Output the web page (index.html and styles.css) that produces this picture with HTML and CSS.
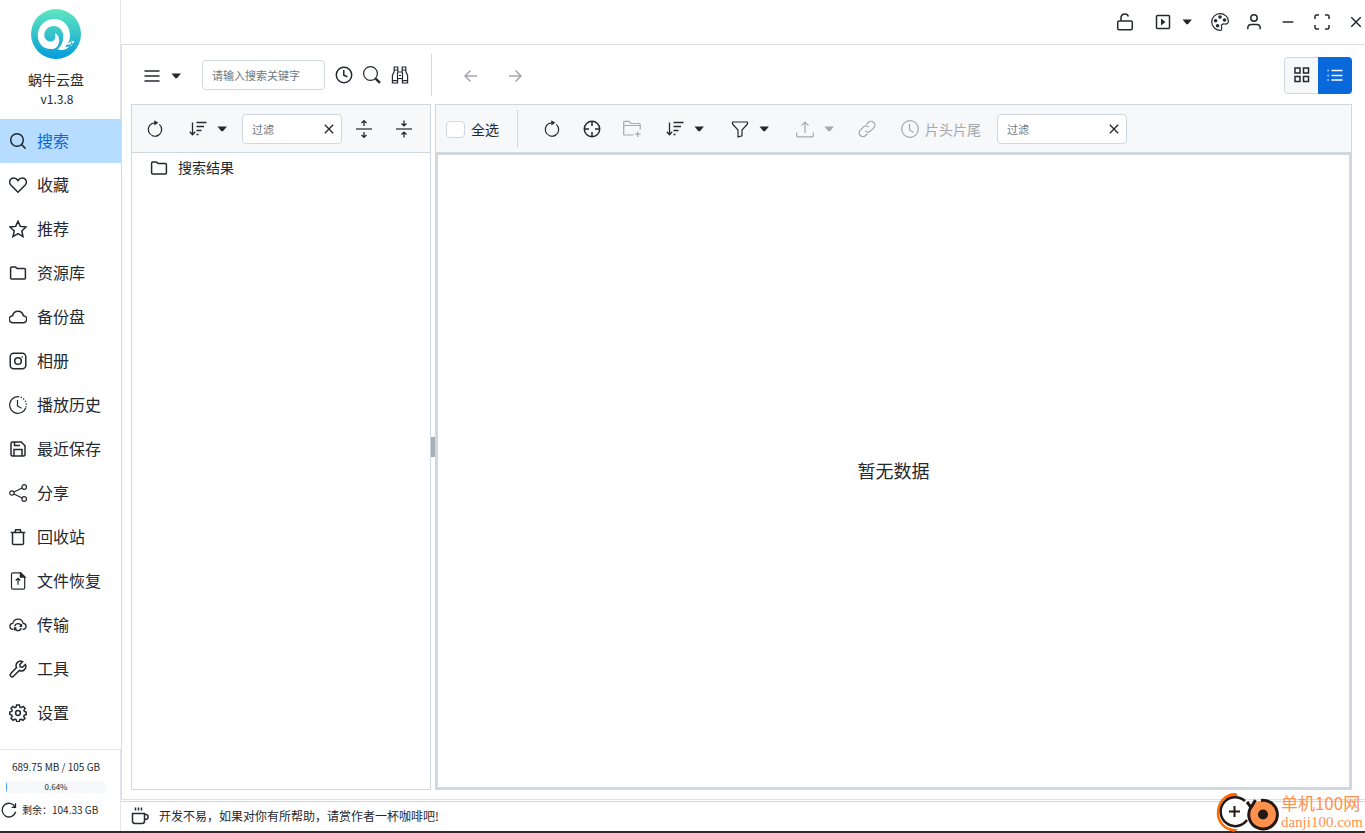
FILE: index.html
```html
<!DOCTYPE html>
<html lang="zh-CN">
<head>
<meta charset="utf-8">
<title>蜗牛云盘</title>
<link rel="stylesheet" href="styles.css">
</head>
<body>
<svg class="sprite" aria-hidden="true">
  <symbol id="i-search" viewBox="0 0 18 18"><circle cx="8" cy="8" r="6.3"/><path d="M12.600 12.600l4 4"/></symbol>
  <symbol id="i-search-thin" viewBox="0 0 18 18"><circle cx="7.500" cy="7.500" r="6.900" stroke-width="1.200"/><path d="M12.600 12.600l4.400 4.200" stroke-width="2.400"/></symbol>
  <symbol id="i-heart" viewBox="0 0 18 18"><path d="M9 16.300L1.800 9C-.6 6.400 1 2 4.700 2c2 0 3.400 1.100 4.300 2.500.9-1.400 2.300-2.500 4.300-2.500 3.700 0 5.300 4.400 2.900 7z"/></symbol>
  <symbol id="i-star" viewBox="0 0 18 18"><path d="M9 1.200l2.300 5.200 5.700.6-4.200 3.900 1.200 5.700L9 13.700l-5 2.900 1.200-5.700L1 7l5.700-.6z"/></symbol>
  <symbol id="i-folder" viewBox="0 0 18 18"><path d="M1.600 14V3.900q0-1 1-1h3.700l1.800 1.500h7.300q1 0 1 1V14q0 1-1 1H2.600q-1 0-1-1z"/></symbol>
  <symbol id="i-cloud" viewBox="0 0 18 18"><path d="M4 14.700a3.500 3.500 0 0 1-.4-7C4.300 4.900 6.400 3.300 9 3.300s4.700 1.600 5.400 4.400a3.500 3.500 0 0 1-.4 7z"/></symbol>
  <symbol id="i-photo" viewBox="0 0 18 18"><rect x="1.200" y="1.200" width="15.600" height="15.600" rx="3.500"/><circle cx="9" cy="9" r="3.300"/><path d="M12.600 5h1.200"/></symbol>
  <symbol id="i-history" viewBox="0 0 18 18"><g stroke-width="1.200"><path d="M9 .700a8.300 8.300 0 1 0 7.800 11"/><path d="M9 .700a8.300 8.300 0 0 1 7.800 11" stroke-dasharray="1.300 1.500"/><path d="M8.500 4v6l4 2.300"/></g></symbol>
  <symbol id="i-save" viewBox="0 0 18 18"><path d="M2 3.500Q2 2 3.500 2h8.700L16 5.800v8.700q0 1.500-1.500 1.500h-11Q2 16 2 14.500zM5 16V9.500h8V16M5.500 2v3.500H11"/></symbol>
  <symbol id="i-share" viewBox="0 0 18 18"><g stroke-width="1.200"><circle cx="2.900" cy="9" r="2.200"/><circle cx="15.200" cy="3" r="2.300"/><circle cx="15.200" cy="15" r="2.300"/><path d="M5 8l8.100-4M5 10l8.100 4"/></g></symbol>
  <symbol id="i-trash" viewBox="0 0 18 18"><path d="M1.700 4.500h14.600M3.500 4.500v10.700q0 1.300 1.300 1.300h8.400q1.300 0 1.300-1.300V4.500M6 4.300L6.700 1.700h4.600l.7 2.600"/></symbol>
  <symbol id="i-restore" viewBox="0 0 18 18"><path stroke-width="1.200" d="M11.500.800H4Q2.500.800 2.500 2.300v13.400q0 1.500 1.500 1.500h10.200q1.500 0 1.500-1.500V5zM9 12.700V6.500M6.700 8.500L9 6.300l2.300 2.200"/><path fill="currentColor" d="M11.500.800V5h4.200z"/></symbol>
  <symbol id="i-transfer" viewBox="0 0 18 18"><g stroke-width="1.300"><path d="M4.300 13.500C-.5 13 .2 7.500 3.800 7.300 5 1.700 13 1.700 14.200 7.300c3.600.2 4.300 5.700-.5 6.200"/><path d="M5.700 10.300a3.400 3.400 0 0 1 6.600 0M12.300 12a3.400 3.400 0 0 1-6.600 0M12.500 8v2.300h-2M5.500 14.200v-2.200h2"/></g></symbol>
  <symbol id="i-wrench" viewBox="0 0 18 18"><path d="M13.600 1.600A4.500 4.500 0 0 0 7.500 7.500L1.800 13.600a1.800 1.800 0 0 0 2.600 2.600l6-5.700a4.500 4.500 0 0 0 6-6L13.500 7.200l-2.300-.4-.4-2.300z"/></symbol>
  <symbol id="i-gear" viewBox="0 0 18 18"><circle cx="9" cy="9" r="2.400"/><path d="M7.600.900h2.800l.5 2.200 1.300.6 2-1.300 1.900 1.900-1.200 2 .5 1.200 1.800.6v2.500l-1.900.5-.6 1.300 1.300 2-2 2-2-1.200-1.300.6-.5 1.900H7.800l-.6-1.900-1.300-.6-1.900 1.200-2-2 1.200-1.900-.5-1.400-1.900-.6V8.100l1.900-.6.500-1.300L2 4.300l1.900-1.900 2 1.300 1.200-.6z"/></symbol>
  <symbol id="i-reload" viewBox="0 0 18 18"><path stroke-width="1.200" d="M13.300 4.400A6.700 6.700 0 1 1 9 2.800"/><path fill="currentColor" stroke="none" d="M8.300.200L12.300 2.800 8.300 5.400z"/></symbol>
  <symbol id="i-cycle" viewBox="0 0 18 18"><path d="M16.500 11A7.700 7.700 0 1 1 15.800 5.500M16.300 1.500v4.500h-4.300"/></symbol>
  <symbol id="i-menu" viewBox="0 0 18 18"><path stroke-width="1.300" d="M1.500 4h15M1.500 9h15M1.500 14h15"/></symbol>
  <symbol id="i-caret" viewBox="0 0 10 6"><path fill="currentColor" stroke="none" d="M.500.500h9.400L6.200 4.900q-1 .8-2 0z"/></symbol>
  <symbol id="i-clock" viewBox="0 0 18 18"><circle cx="9" cy="9" r="7.700"/><path d="M8.800 4v5.200l3.600 1.500"/></symbol>
  <symbol id="i-clock-thin" viewBox="0 0 18 18"><g stroke-width="1.200"><circle cx="9" cy="9" r="8.300"/><path d="M8.500 4v6l4 2.500"/></g></symbol>
  <symbol id="i-binoculars" viewBox="0 0 18 18"><path stroke-width="1.200" d="M3.200 1h3.600v3H3.200zM11.200 1h3.600v3h-3.600zM3.200 4v1.500L1.400 9.500V17h5.200v-4.500h4.800V17h5.200V9.500l-1.800-4V4M6.800 4v2h4.400V4M6.500 6v6.500M11.500 6v6.500M1.400 14.700h5.200M11.400 14.700h5.200M8 9.500h2"/></symbol>
  <symbol id="i-sort" viewBox="0 0 18 18"><path stroke-width="1.300" d="M3.500 2.500v12M.800 11.800l2.700 3 2.700-3M7.500 2.500h10M7.500 6.500h7.500M7.500 10.500h5M7.500 14.500h2"/></symbol>
  <symbol id="i-x" viewBox="0 0 18 18"><path d="M4.300 4.300l9.400 9.400M13.700 4.300l-9.400 9.400"/></symbol>
  <symbol id="i-expand" viewBox="0 0 18 18"><path stroke-width="1.200" d="M1 9h16"/><path stroke-width="1.300" d="M9 6V.700M6.500 3L9 .700 11.500 3M9 12v5.300M6.500 15L9 17.300l2.500-2.300"/></symbol>
  <symbol id="i-collapse" viewBox="0 0 18 18"><path stroke-width="1.200" d="M1 9h16"/><path stroke-width="1.300" d="M9 .500v5.300M6.500 3.500L9 5.800l2.500-2.300M9 17.500v-5.300M6.500 14.500L9 12.200l2.500 2.300"/></symbol>
  <symbol id="i-left" viewBox="0 0 18 18"><path d="M15 9H3.500M8.500 3.500L3 9l5.500 5.500"/></symbol>
  <symbol id="i-right" viewBox="0 0 18 18"><path d="M3 9h11.500M9.500 3.500L15 9l-5.500 5.500"/></symbol>
  <symbol id="i-target" viewBox="0 0 18 18"><circle cx="9" cy="9" r="7.700"/><path d="M9 1.300V6M9 12v4.700M1.300 9H6M12 9h4.700"/></symbol>
  <symbol id="i-folder-plus" viewBox="0 0 18 18"><path stroke-width="1.200" d="M10.500 15H1.800Q.700 15 .700 14V2.300q0-1 1.100-1H6l2 2.200h8q1.200 0 1.200 1V9.500M.700 5.500h16.500M14.700 11.500v5.500M12 14.200h5.500"/></symbol>
  <symbol id="i-filter" viewBox="0 0 18 18"><path stroke-width="1.200" d="M1.500 2h15v2L11 10v5.700L7 17v-7L1.500 4z"/></symbol>
  <symbol id="i-upload" viewBox="0 0 18 18"><path stroke-width="1.200" d="M.700 12.500v3.300q0 1 1 1h14.600q1 0 1-1v-3.300M9 13V2.500M5.500 5.700L9 2l3.500 3.700"/></symbol>
  <symbol id="i-link" viewBox="0 0 18 18"><path stroke-width="1.300" d="M7.200 10.900a3.600 3.600 0 0 0 5.200.2l3.300-3.200a3.800 3.800 0 0 0-5.400-5.400L8.500 4.300M10.800 7.100a3.600 3.600 0 0 0-5.200-.2l-3.300 3.200a3.800 3.800 0 0 0 5.400 5.400l1.800-1.800"/></symbol>
  <symbol id="i-unlock" viewBox="0 0 18 18"><rect x="1.700" y="8" width="14.600" height="8.800" rx="1.500"/><path d="M5 8V4.700A3.800 3.800 0 0 1 12.400 3.500"/></symbol>
  <symbol id="i-play" viewBox="0 0 18 18"><rect x="2.500" y="2.500" width="13" height="13" rx="1"/><path fill="currentColor" stroke="none" d="M7 5.500L11.500 9 7 12.500z"/></symbol>
  <symbol id="i-palette" viewBox="0 0 18 18"><path stroke-width="1.200" d="M9.500 17.300C5 17.300.700 13.800.700 9A8.300 8.300 0 0 1 9 .700c4.700 0 8.400 3.300 8.400 7.300 0 2.700-1.700 3.200-3.700 3-2.500-.3-3.700.7-3.200 2.700.4 1.400.3 3.600-1 3.600z"/><g fill="currentColor" stroke="none"><circle cx="9" cy="4" r="1.800"/><circle cx="13.500" cy="7" r="1.800"/><circle cx="4.600" cy="7.700" r="1.800"/><circle cx="6.600" cy="12.700" r="1.800"/></g></symbol>
  <symbol id="i-user" viewBox="0 0 18 18"><circle cx="9" cy="5" r="3.200"/><path d="M2.800 16.200V15q0-3.500 3.500-3.500h5.400q3.500 0 3.500 3.500v1.200"/></symbol>
  <symbol id="i-minus" viewBox="0 0 18 18"><path d="M3.700 9h10.600"/></symbol>
  <symbol id="i-full" viewBox="0 0 18 18"><path d="M2 6V3.500Q2 2 3.500 2H6M12 2h2.500Q16 2 16 3.500V6M16 12v2.500q0 1.500-1.500 1.500H12M6 16H3.500Q2 16 2 14.500V12"/></symbol>
  <symbol id="i-grid" viewBox="0 0 18 18"><path d="M2 2h5v5H2zM10.500 2h5v5h-5zM2 10.500h5v5H2zM10.500 10.500h5v5h-5z"/></symbol>
  <symbol id="i-list" viewBox="0 0 18 18"><path stroke-width="1.300" d="M5.500 4.500h11M5.500 9.500h11M5.500 14h11M1.500 4.500h1.200M1.500 9.500h1.200M1.500 14h1.200"/></symbol>
  <symbol id="i-cup" viewBox="0 0 18 18"><path d="M1.500 6.500h12V14q0 2.500-2.500 2.500H4q-2.500 0-2.500-2.500zM13.500 7.500H15q2 0 2 2v.8q0 2-2 2h-1.500M4.500.500v3M7.500.500v3M10.500.500v3"/></symbol>
</svg>

<div class="app">
  <aside class="sidebar">
    <div class="brand">
      <svg class="brand-logo" viewBox="0 0 50 50" aria-hidden="true">
        <defs><linearGradient id="sea" x1="0" y1="0" x2="0" y2="1"><stop offset="0" stop-color="#5ee8c0"/><stop offset=".5" stop-color="#35c3cb"/><stop offset="1" stop-color="#039bdd"/></linearGradient></defs>
        <circle cx="25" cy="25" r="25" fill="url(#sea)"/>
        <path fill="#fff" d="M22 40C12 41 6.800 34 6.800 26.500 6.800 17 14 10 23 10c10 0 16 7.500 16 16.500 0 5-2 8.500-5 11 1.500.5 3 .5 4.500-.5-2 4-8 4.500-12 3.500 4-3.500 6-8.500 5.800-13.500C32 21 28 17 22.500 17c-5 0-9.200 4-9.200 9 0 4 3 6.500 6 6.500 4 0 6-3.500 4.700-8.500 4 2.500 5 7 3.500 11-1 3-3 4.500-5.500 5z"/>
        <path fill="#fff" d="M36 34.500l3.500-1.500 1-2-.5 3.500-3 1.500zM41 32h2v1.500l-2 1zM39.500 36l2-.5-1.500 1.800z"/>
      </svg>
      <div class="brand-name">蜗牛云盘</div>
      <div class="brand-version">v1.3.8</div>
    </div>
    <nav class="nav">
      <a class="nav-item active" href="#"><svg class="icon"><use href="#i-search"/></svg>搜索</a>
      <a class="nav-item" href="#"><svg class="icon"><use href="#i-heart"/></svg>收藏</a>
      <a class="nav-item" href="#"><svg class="icon"><use href="#i-star"/></svg>推荐</a>
      <a class="nav-item" href="#"><svg class="icon"><use href="#i-folder"/></svg>资源库</a>
      <a class="nav-item" href="#"><svg class="icon"><use href="#i-cloud"/></svg>备份盘</a>
      <a class="nav-item" href="#"><svg class="icon"><use href="#i-photo"/></svg>相册</a>
      <a class="nav-item" href="#"><svg class="icon"><use href="#i-history"/></svg>播放历史</a>
      <a class="nav-item" href="#"><svg class="icon"><use href="#i-save"/></svg>最近保存</a>
      <a class="nav-item" href="#"><svg class="icon"><use href="#i-share"/></svg>分享</a>
      <a class="nav-item" href="#"><svg class="icon"><use href="#i-trash"/></svg>回收站</a>
      <a class="nav-item" href="#"><svg class="icon"><use href="#i-restore"/></svg>文件恢复</a>
      <a class="nav-item" href="#"><svg class="icon"><use href="#i-transfer"/></svg>传输</a>
      <a class="nav-item" href="#"><svg class="icon"><use href="#i-wrench"/></svg>工具</a>
      <a class="nav-item" href="#"><svg class="icon"><use href="#i-gear"/></svg>设置</a>
    </nav>
    <div class="storage">
      <div class="storage-total">689.75 MB / 105 GB</div>
      <div class="meter"><div class="meter-fill" style="width:0.64%"></div><span class="meter-label">0.64%</span></div>
      <div class="storage-left"><button class="plain" type="button" aria-label="刷新容量"><svg class="icon icon-sm"><use href="#i-cycle"/></svg></button><span>剩余：104.33 GB</span></div>
    </div>
  </aside>

  <div class="main">
    <header class="titlebar">
      <button class="tool" type="button" aria-label="解锁"><svg class="icon"><use href="#i-unlock"/></svg></button>
      <button class="drop drop-play" type="button" aria-label="播放"><svg class="icon"><use href="#i-play"/></svg><svg class="caret"><use href="#i-caret"/></svg></button>
      <button class="tool" type="button" aria-label="主题"><svg class="icon"><use href="#i-palette"/></svg></button>
      <button class="tool" type="button" aria-label="账户"><svg class="icon"><use href="#i-user"/></svg></button>
      <button class="tool" type="button" aria-label="最小化"><svg class="icon"><use href="#i-minus"/></svg></button>
      <button class="tool" type="button" aria-label="最大化"><svg class="icon"><use href="#i-full"/></svg></button>
      <button class="tool close" type="button" aria-label="关闭"><svg class="icon"><use href="#i-x"/></svg></button>
    </header>

    <main class="workspace">
      <div class="searchbar">
        <button class="drop drop-menu" type="button" aria-label="菜单"><svg class="icon"><use href="#i-menu"/></svg><svg class="caret"><use href="#i-caret"/></svg></button>
        <div class="field field-search"><input type="text" aria-label="搜索关键字" placeholder="请输入搜索关键字"></div>
        <div class="search-actions">
          <button class="tool" type="button" aria-label="搜索记录"><svg class="icon"><use href="#i-clock"/></svg></button>
          <button class="tool" type="button" aria-label="搜索"><svg class="icon"><use href="#i-search-thin"/></svg></button>
          <button class="tool" type="button" aria-label="全局查找"><svg class="icon"><use href="#i-binoculars"/></svg></button>
        </div>
        <div class="history">
          <button class="tool" type="button" aria-label="后退" disabled><svg class="icon"><use href="#i-left"/></svg></button>
          <button class="tool" type="button" aria-label="前进" disabled><svg class="icon"><use href="#i-right"/></svg></button>
        </div>
        <div class="views">
          <button class="view" type="button" aria-label="网格视图"><svg class="icon"><use href="#i-grid"/></svg></button>
          <button class="view selected" type="button" aria-label="列表视图"><svg class="icon"><use href="#i-list"/></svg></button>
        </div>
      </div>

      <div class="panes">
        <section class="pane tree-pane">
          <div class="toolbar tree-toolbar">
            <button class="tool" type="button" aria-label="刷新目录"><svg class="icon"><use href="#i-reload"/></svg></button>
            <button class="drop" type="button" aria-label="目录排序"><svg class="icon"><use href="#i-sort"/></svg><svg class="caret"><use href="#i-caret"/></svg></button>
            <div class="field field-tree"><input type="text" aria-label="过滤目录" placeholder="过滤"><button class="plain" type="button" aria-label="清除"><svg class="icon icon-sm"><use href="#i-x"/></svg></button></div>
            <button class="tool" type="button" aria-label="展开"><svg class="icon"><use href="#i-expand"/></svg></button>
            <button class="tool" type="button" aria-label="折叠"><svg class="icon"><use href="#i-collapse"/></svg></button>
          </div>
          <a class="tree-item" href="#"><svg class="icon"><use href="#i-folder"/></svg>搜索结果</a>
        </section>
        <div class="splitter"><span class="grip"></span></div>
        <section class="pane file-pane">
          <div class="toolbar">
            <label class="check-all"><input type="checkbox">全选</label>
            <button class="tool" type="button" aria-label="刷新文件"><svg class="icon"><use href="#i-reload"/></svg></button>
            <button class="tool" type="button" aria-label="定位"><svg class="icon"><use href="#i-target"/></svg></button>
            <button class="tool" type="button" aria-label="新建文件夹" disabled><svg class="icon"><use href="#i-folder-plus"/></svg></button>
            <button class="drop" type="button" aria-label="文件排序"><svg class="icon"><use href="#i-sort"/></svg><svg class="caret"><use href="#i-caret"/></svg></button>
            <button class="drop" type="button" aria-label="筛选"><svg class="icon"><use href="#i-filter"/></svg><svg class="caret"><use href="#i-caret"/></svg></button>
            <button class="drop" type="button" aria-label="上传" disabled><svg class="icon"><use href="#i-upload"/></svg><svg class="caret"><use href="#i-caret"/></svg></button>
            <button class="tool" type="button" aria-label="链接" disabled><svg class="icon"><use href="#i-link"/></svg></button>
            <button class="labelled" type="button" disabled><svg class="icon"><use href="#i-clock-thin"/></svg>片头片尾</button>
            <div class="field field-files"><input type="text" aria-label="过滤文件" placeholder="过滤"><button class="plain" type="button" aria-label="清除"><svg class="icon icon-sm"><use href="#i-x"/></svg></button></div>
          </div>
          <div class="files">暂无数据</div>
        </section>
      </div>
    </main>

    <footer class="statusbar"><svg class="icon"><use href="#i-cup"/></svg>开发不易，如果对你有所帮助，请赏作者一杯咖啡吧!</footer>
  </div>

  <div class="watermark">
    <svg class="watermark-logo" viewBox="0 0 64 42" aria-hidden="true">
      <g fill="none">
        <path d="M20 3.500C8 3.500 2 12 2 22c0 9 6 16 17 17.500" stroke="#ff6a00" stroke-width="2.500"/>
        <path d="M9 6.500Q15-.500 22 3.500L20 6Q14 5 10 8.500zM11 37l11 1.500q-5 4-9 0z" fill="#ff6a00"/>
        <circle cx="19" cy="20.500" r="14.500" fill="#fff"/>
        <path d="M29 10A14.500 14.500 0 1 0 31 29" stroke="#231815" stroke-width="2.500"/>
        <path d="M13 20.500h11M18.500 15v11" stroke="#231815" stroke-width="2"/>
        <circle cx="47" cy="23.500" r="14" fill="#ff914d"/>
        <path d="M45 9.500A14.300 14.300 0 1 1 35 16M31 11l4.500 6M39.500 9L35 16.500" stroke="#231815" stroke-width="3"/>
        <circle cx="47" cy="23.500" r="5" fill="#231815"/>
      </g>
    </svg>
    <div class="watermark-text"><div class="watermark-name">单机100网</div><div class="watermark-site">danji100.com</div></div>
  </div>
</div>
</body>
</html>
```

FILE: styles.css
```css
* {
  box-sizing: border-box;
}

body {
  margin: 0;
  color: #24292f;
  font-family: "Noto Sans CJK SC", sans-serif;
  font-size: 14px;
  line-height: 20px;
}

button,
input {
  margin: 0;
  padding: 0;
  border: 0;
  background: none;
  color: inherit;
  font: inherit;
}

a {
  color: inherit;
  text-decoration: none;
}

.sprite {
  position: absolute;
  width: 0;
  height: 0;
}

.icon {
  flex: none;
  width: 18px;
  height: 18px;
  fill: none;
  stroke: currentColor;
  stroke-width: 1.5;
}

.icon-sm {
  width: 16px;
  height: 16px;
}

.caret {
  flex: none;
  width: 10px;
  height: 6px;
}

.app {
  position: relative;
  display: flex;
  height: 100vh;
  border-bottom: 2px solid #2b2d31;
  background: #fff;
}

/* Sidebar */
.sidebar {
  display: flex;
  flex: none;
  flex-direction: column;
  width: 121px;
}

.brand {
  display: flex;
  flex-direction: column;
  align-items: center;
  height: 119px;
  padding: 9px 8px 0 0;
  border-right: 1px solid #e4e6eb;
}

.brand-logo {
  width: 50px;
  height: 50px;
  margin-bottom: 10px;
}

.brand-version {
  padding-left: 2px;
  font-size: 12px;
}

.nav {
  flex: 1;
}

.nav-item {
  display: flex;
  align-items: center;
  gap: 10px;
  height: 44px;
  padding: 0 0 2px 9px;
  font-size: 16px;
}

.nav-item .icon {
  margin-top: 2px;
}

.nav-item.active {
  background: #b6dcff;
  color: #0969da;
}

.nav-item.active .icon {
  color: #24292f;
}

.storage {
  height: 82px;
  padding-top: 7px;
  border-top: 1px solid #e4e6eb;
  border-right: 1px solid #e4e6eb;
  font-size: 10px;
}

.storage-total {
  padding-right: 8px;
  text-align: center;
}

.meter {
  position: relative;
  width: 100px;
  height: 12px;
  margin: 4px 0 0 6px;
  overflow: hidden;
  border-radius: 4px;
  background: #f6f8fa;
  font-size: 8px;
  line-height: 12px;
  text-align: center;
}

.meter-fill {
  position: absolute;
  top: 0;
  left: 0;
  min-width: 1px;
  height: 100%;
  background: #4a9bee;
}

.storage-left {
  display: flex;
  align-items: center;
  gap: 5px;
  margin-top: 7px;
  padding-left: 1px;
}

.plain {
  display: flex;
  flex: none;
}

/* Title bar */
.main {
  display: flex;
  flex: 1;
  flex-direction: column;
  min-width: 0;
}

.titlebar {
  display: flex;
  flex: none;
  justify-content: flex-end;
  height: 45px;
  border-bottom: 1px solid #dcdfe4;
}

.tool {
  display: flex;
  flex: none;
  align-items: center;
  justify-content: center;
  width: 40px;
  height: 100%;
}

.titlebar .tool {
  width: 34px;
}

.titlebar .close {
  width: 18px;
  margin-left: 8px;
}

.drop {
  display: flex;
  flex: none;
  align-items: center;
  gap: 10px;
  height: 100%;
  padding: 0 13px 0 14px;
}

.drop-play {
  padding: 0 11px 0 12px;
}

button:disabled {
  color: #a5a8ac;
}

/* Workspace */
.workspace {
  display: flex;
  flex: 1;
  flex-direction: column;
  min-height: 0;
  padding: 0 13px 9px 9px;
  border-bottom: 1px solid #dcdfe4;
  border-left: 1px solid #d8dbe1;
}

.searchbar {
  display: flex;
  flex: none;
  align-items: center;
  height: 59px;
  padding-top: 1px;
}

.drop-menu {
  padding: 1px 13px 0 12px;
}

.field {
  display: flex;
  flex: none;
  align-items: center;
  height: 30px;
  padding: 0 4px 0 9px;
  border: 1px solid #d0d7de;
  border-radius: 4px;
  background: #fff;
  font-size: 11px;
}

.field input {
  flex: 1;
  min-width: 0;
  height: 100%;
  outline: 0;
}

.field input::placeholder {
  color: #6e7781;
  opacity: 1;
}

.field-search {
  width: 123px;
  margin-left: 8px;
}

.search-actions {
  display: flex;
  margin-left: 5px;
}

.search-actions .tool {
  width: 28px;
}

.history {
  display: flex;
  height: 42px;
  margin-left: 17px;
  padding: 1px 0 0 17px;
  border-left: 1px solid #d0d7de;
}

.history .tool {
  width: 44px;
}

.views {
  display: flex;
  height: 37px;
  margin-left: auto;
  overflow: hidden;
  border-radius: 4px;
}

.view {
  display: flex;
  align-items: center;
  justify-content: center;
  width: 34px;
  border: 1px solid #d0d7de;
  border-right: 0;
  border-radius: 4px 0 0 4px;
  background: #f6f8fa;
}

.view.selected {
  border: 0;
  border-radius: 0;
  background: #0969da;
  color: #fff;
}

.panes {
  display: flex;
  flex: 1;
  min-height: 0;
}

.pane {
  display: flex;
  flex-direction: column;
  border: 1px solid #d0d7de;
}

.tree-pane {
  flex: none;
  width: 300px;
}

.file-pane {
  flex: 1;
  min-width: 0;
}

.toolbar {
  display: flex;
  flex: none;
  align-items: center;
  height: 47px;
  background: #f6f8fa;
}

.tree-toolbar {
  height: 48px;
  padding-left: 3px;
  border-bottom: 1px solid #d0d7de;
}

.field-tree {
  width: 100px;
  margin: 0 2px;
}

.tree-item {
  display: flex;
  align-items: center;
  gap: 10px;
  height: 30px;
  padding: 0 0 2px 18px;
}

.tree-item .icon {
  margin-top: 2px;
}

.splitter {
  display: flex;
  flex: none;
  align-items: center;
  width: 4px;
}

.grip {
  width: 4px;
  height: 20px;
  background: #a9afb6;
}

.check-all {
  display: flex;
  align-items: center;
  gap: 6px;
  height: 38px;
  margin-right: 14px;
  padding: 1px 18px 0 10px;
  border-right: 1px solid #d0d7de;
}

.check-all input {
  width: 19px;
  height: 17px;
  border: 1px solid #d0d7de;
  border-radius: 4px;
  background: #fff;
  appearance: none;
}

.labelled {
  display: flex;
  flex: none;
  align-items: center;
  gap: 6px;
  height: 100%;
  padding: 0 16px 0 14px;
}

.field-files {
  width: 130px;
}

.files {
  display: flex;
  flex: 1;
  align-items: center;
  justify-content: center;
  padding-bottom: 2px;
  border: 2px solid #d0d7de;
  border-top-width: 3px;
  font-size: 18px;
}

/* Status bar */
.statusbar {
  display: flex;
  flex: none;
  align-items: center;
  gap: 10px;
  height: 30px;
  margin-top: 1px;
  padding: 0 0 1px 10px;
  border-top: 1px solid #d0d7de;
  font-size: 12px;
}

.watermark {
  position: absolute;
  right: 2px;
  bottom: -2px;
  display: flex;
  gap: 1px;
  color: #ff914d;
  white-space: nowrap;
}

.watermark-logo {
  width: 64px;
  height: 42px;
}

.watermark-text {
  padding-top: 1px;
}

.watermark-name {
  font-size: 17px;
  line-height: 22px;
}

.watermark-site {
  font-family: "Liberation Serif", serif;
  font-size: 15px;
  line-height: 17px;
}
```
